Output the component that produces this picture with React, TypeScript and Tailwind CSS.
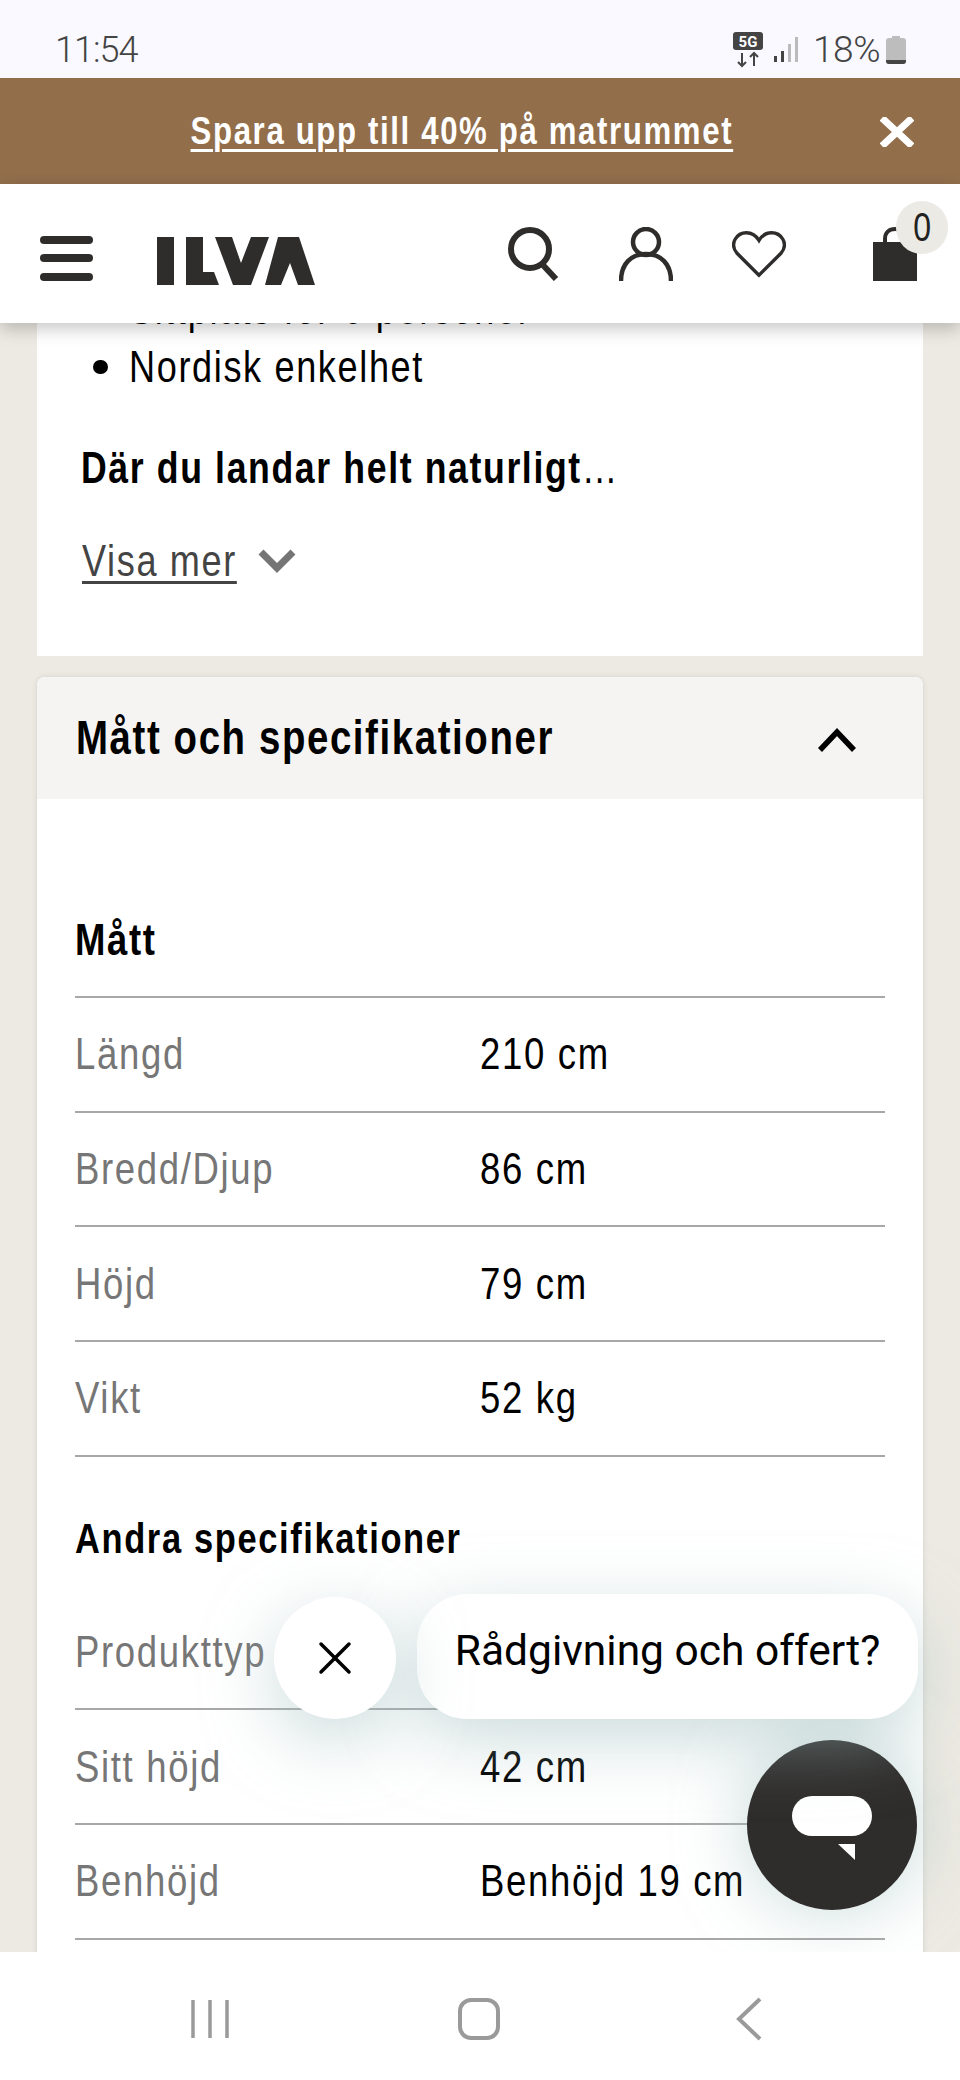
import React from 'react';
import { X } from 'lucide-react';

const measures = [
  { label: 'Längd', value: '210 cm' },
  { label: 'Bredd/Djup', value: '86 cm' },
  { label: 'Höjd', value: '79 cm' },
  { label: 'Vikt', value: '52 kg' },
];

// the first value sits behind the chat bubble in the picture
const others = [
  { label: 'Produkttyp', value: '' },
  { label: 'Sitt höjd', value: '42 cm' },
  { label: 'Benhöjd', value: 'Benhöjd 19 cm' },
];

// the site's font is a condensed grotesque, no such family here so squeeze Liberation Sans
const Narrow = ({ children, className = 'scale-x-[0.83]' }: { children: React.ReactNode; className?: string }) => (
  <span className={`inline-block origin-left whitespace-nowrap tracking-[2px] ${className}`}>{children}</span>
);

const SpecRow = ({ label, value }: { label: string; value: string }) => (
  <div className="flex h-[114.67px] items-center border-b-2 border-[#a8a8a8] text-[44px]">
    <span className="w-[405px] text-[#767676]">
      <Narrow>{label}</Narrow>
    </span>
    <span className="text-black">
      <Narrow>{value}</Narrow>
    </span>
  </div>
);

const StatusBar = () => (
  <div className="flex h-[78px] shrink-0 items-center justify-between bg-[#f9f9ff] pl-[55px] pr-[54px] pt-[22px] font-['Roboto',sans-serif] font-light text-[#444]">
    <span className="text-[36px] tracking-[-1px]">11:54</span>
    <div className="flex items-center">
      <svg width="32" height="36" viewBox="0 0 32 36" className="mr-[9px]">
        <rect x="1" y="0" width="30" height="18" rx="3" fill="#444" />
        <text x="16" y="15" textAnchor="middle" fontSize="15" fontWeight="700" fill="#fff" fontFamily="Roboto, sans-serif">5G</text>
        <path d="M10 21v13M6 30l4 4 4-4M22 34V21M18 25l4-4 4 4" stroke="#444" strokeWidth="2" fill="none" />
      </svg>
      <svg width="26" height="26" viewBox="0 0 26 26" className="mr-[14px]">
        <rect x="1" y="19" width="3" height="6" fill="#444" />
        <rect x="8" y="14" width="3" height="11" fill="#444" />
        <rect x="15" y="7" width="3" height="18" fill="#bbb" />
        <rect x="22" y="0" width="3" height="25" fill="#bbb" />
      </svg>
      <span className="mr-[6px] text-[37px] tracking-[-0.5px]">18%</span>
      <svg width="20" height="28" viewBox="0 0 20 28">
        <path d="M6 0h8v2h3a3 3 0 0 1 3 3v20a3 3 0 0 1-3 3H3a3 3 0 0 1-3-3V5a3 3 0 0 1 3-3h3z" fill="#bdbdbd" />
        <path d="M0 24h20v1a3 3 0 0 1-3 3H3a3 3 0 0 1-3-3z" fill="#444" />
      </svg>
    </div>
  </div>
);

const Header = () => (
  <header className="relative z-10 flex h-[139px] shrink-0 items-center bg-white pl-[40px] shadow-[0_6px_16px_rgba(0,0,0,0.22)]">
    <div className="mt-[9px] flex w-[53px] flex-col gap-[10.5px]">
      <span className="h-[8px] rounded-full bg-[#2f2d2c]" />
      <span className="h-[8px] rounded-full bg-[#2f2d2c]" />
      <span className="h-[8px] rounded-full bg-[#2f2d2c]" />
    </div>
    <svg width="158" height="48" viewBox="0 0 158 48" className="ml-[64px] mt-[15px]" fill="#2f2d2c">
      <path d="M0 0h17v48H0z" />
      <path d="M29 0h17v35h11l5 13H29z" />
      <path d="M58 0h17l9 26 10-26h18L94 48H76z" />
      <path d="M121 0h21l16 48h-17l-8-22-9 22h-16z" />
    </svg>
    <svg width="52" height="54" viewBox="0 0 52 54" className="ml-[193px]" fill="none" stroke="#2f2d2c" strokeWidth="6">
      <circle cx="22" cy="22" r="19" />
      <path d="M34 37l14 15" />
    </svg>
    <svg width="54" height="54" viewBox="0 0 54 54" className="ml-[59px]" fill="none" stroke="#2f2d2c" strokeWidth="4.5">
      <circle cx="27" cy="15" r="13" />
      <path d="M2 54c0-17 10-27 25-27s25 10 25 27" />
    </svg>
    <svg width="54" height="48" viewBox="0 0 56 48" className="ml-[59px]" fill="none" stroke="#2f2d2c" strokeWidth="3.5">
      <path d="M28 46L5 23C-3 13 5 2 15 2c6 0 10 3 13 8 3-5 7-8 13-8 10 0 18 11 10 21z" />
    </svg>
    <div className="relative ml-[87px] h-[54px] w-[44px]">
      <svg width="44" height="54" viewBox="0 0 44 54" fill="#2f2d2c">
        <path d="M12 16V12C12 6 16 2 22 2s10 4 10 10v4" fill="none" stroke="#2f2d2c" strokeWidth="4" />
        <rect x="0" y="15" width="44" height="39" />
      </svg>
      <span className="absolute left-[23px] top-[-26px] flex h-[53px] w-[52px] items-center justify-center rounded-full bg-[#eceae4] text-[40px] text-[#222]">
        <span className="inline-block scale-x-[0.8]">0</span>
      </span>
    </div>
  </header>
);

const NavBar = () => (
  <div className="relative z-20 flex h-[128px] shrink-0 items-center bg-white pt-[6px]">
    <svg width="40" height="38" viewBox="0 0 40 38" className="ml-[190px]" stroke="#9a9a9a" strokeWidth="3.5" fill="none">
      <path d="M3 0v38M20 0v38M37 0v38" />
    </svg>
    <svg width="42" height="42" viewBox="0 0 42 42" className="ml-[228px]" stroke="#9a9a9a" strokeWidth="4" fill="none">
      <rect x="2" y="2" width="38" height="38" rx="11" />
    </svg>
    <svg width="28" height="44" viewBox="0 0 28 44" className="ml-[235px]" stroke="#9a9a9a" strokeWidth="4" fill="none">
      <path d="M25 2L4 22l21 20" />
    </svg>
  </div>
);

export default function App() {
  return (
    <div className="flex h-[2080px] w-[960px] flex-col overflow-hidden bg-[#edeae3] font-['Liberation_Sans',sans-serif]">
      <StatusBar />

      <div className="relative flex h-[106px] shrink-0 items-center justify-center bg-[#926e4b] pr-[37px]">
        <a className="inline-block scale-x-[0.82] whitespace-nowrap text-[38px] font-bold tracking-[2px] text-white underline decoration-[3px] underline-offset-[5px]">
          Spara upp till 40% på matrummet
        </a>
        <svg width="34" height="30" viewBox="0 0 34 30" className="absolute right-[46px] top-[39px]" fill="none" stroke="#fff" strokeWidth="7">
          <path d="M2 1l30 28M32 1L2 29" />
        </svg>
      </div>

      <Header />

      <main className="relative min-h-0 flex-1 overflow-hidden">
        <section className="mx-[37px] h-[333px] flow-root bg-white pl-[44px]">
          <ul className="-mt-[43px] text-[44px] leading-[58px] text-black">
            <li className="flex items-center">
              <span className="ml-[12px] mr-[21px] h-[14px] w-[15px] rounded-full bg-black" />
              <Narrow className="scale-x-[0.82]">Sittplats för 6 personer</Narrow>
            </li>
            <li className="flex items-center">
              <span className="ml-[12px] mr-[21px] h-[14px] w-[15px] rounded-full bg-black" />
              <Narrow className="scale-x-[0.82]">Nordisk enkelhet</Narrow>
            </li>
          </ul>
          <p className="mt-[43px] text-[44px] font-bold leading-[58px] text-black">
            <Narrow className="scale-x-[0.81]">
              Där du landar helt naturligt<span className="font-normal">…</span>
            </Narrow>
          </p>
          <div className="mt-[35px] flex items-center text-[44px] leading-[58px] text-[#444]">
            <Narrow className="ml-[1px] w-[189px] scale-x-[0.82] underline decoration-[3px] underline-offset-[5px]">Visa mer</Narrow>
            <svg width="38" height="24" viewBox="0 0 38 24" className="ml-[-13px]" fill="none" stroke="#757575" strokeWidth="7">
              <path d="M3 3l16 16L35 3" />
            </svg>
          </div>
        </section>

        <section className="mx-[37px] mt-[21px] rounded-t-[8px] bg-white pb-[60px] shadow-[0_0_6px_rgba(0,0,0,0.1)]">
          <div className="flex h-[122px] items-center justify-between rounded-t-[8px] bg-[#f5f4f2] pl-[39px] pr-[66px]">
            <h2 className="text-[48px] font-bold text-black">
              <Narrow className="scale-x-[0.8]">Mått och specifikationer</Narrow>
            </h2>
            <svg width="40" height="26" viewBox="0 0 40 26" className="mt-[4px]" fill="none" stroke="#000" strokeWidth="5.5">
              <path d="M3 23L20 5l17 18" />
            </svg>
          </div>
          <div className="px-[38px] pt-[107px]">
            <h3 className="border-b-2 border-[#a8a8a8] pb-[22px] text-[44px] font-bold leading-[68px] text-black">
              <Narrow className="scale-x-[0.83]">Mått</Narrow>
            </h3>
            {measures.map((row) => (
              <SpecRow key={row.label} {...row} />
            ))}
            <h3 className="mb-[23px] mt-[48px] text-[42px] font-bold leading-[68px] text-black">
              <Narrow className="scale-x-[0.82]">Andra specifikationer</Narrow>
            </h3>
            {others.map((row) => (
              <SpecRow key={row.label} {...row} />
            ))}
          </div>
        </section>

        {/* chat widget */}
        <div className="absolute bottom-[42px] right-[43px] flex h-[170px] w-[170px] items-center justify-center rounded-full bg-[#2f2d2c] shadow-[0_0_70px_rgba(160,190,190,0.6)]">
          <svg width="80" height="64" viewBox="0 0 80 64" fill="#fff" className="mt-[6px]">
            <rect width="80" height="40" rx="20" />
            <path d="M46 48h17v16z" />
          </svg>
        </div>
        <div className="absolute bottom-[233px] right-[42px] flex h-[125px] w-[501px] items-center justify-center rounded-[50px] bg-white pb-[12px] font-['Roboto',sans-serif] text-[42.5px] text-black shadow-[0_20px_70px_rgba(160,190,190,0.55)]">
          Rådgivning och offert?
        </div>
        <div className="absolute bottom-[233px] right-[564px] flex h-[122px] w-[122px] items-center justify-center rounded-full bg-white shadow-[0_20px_70px_rgba(160,190,190,0.55)]">
          <X className="h-[56px] w-[56px] text-black" strokeWidth={1.5} />
        </div>
      </main>

      <NavBar />
    </div>
  );
}
